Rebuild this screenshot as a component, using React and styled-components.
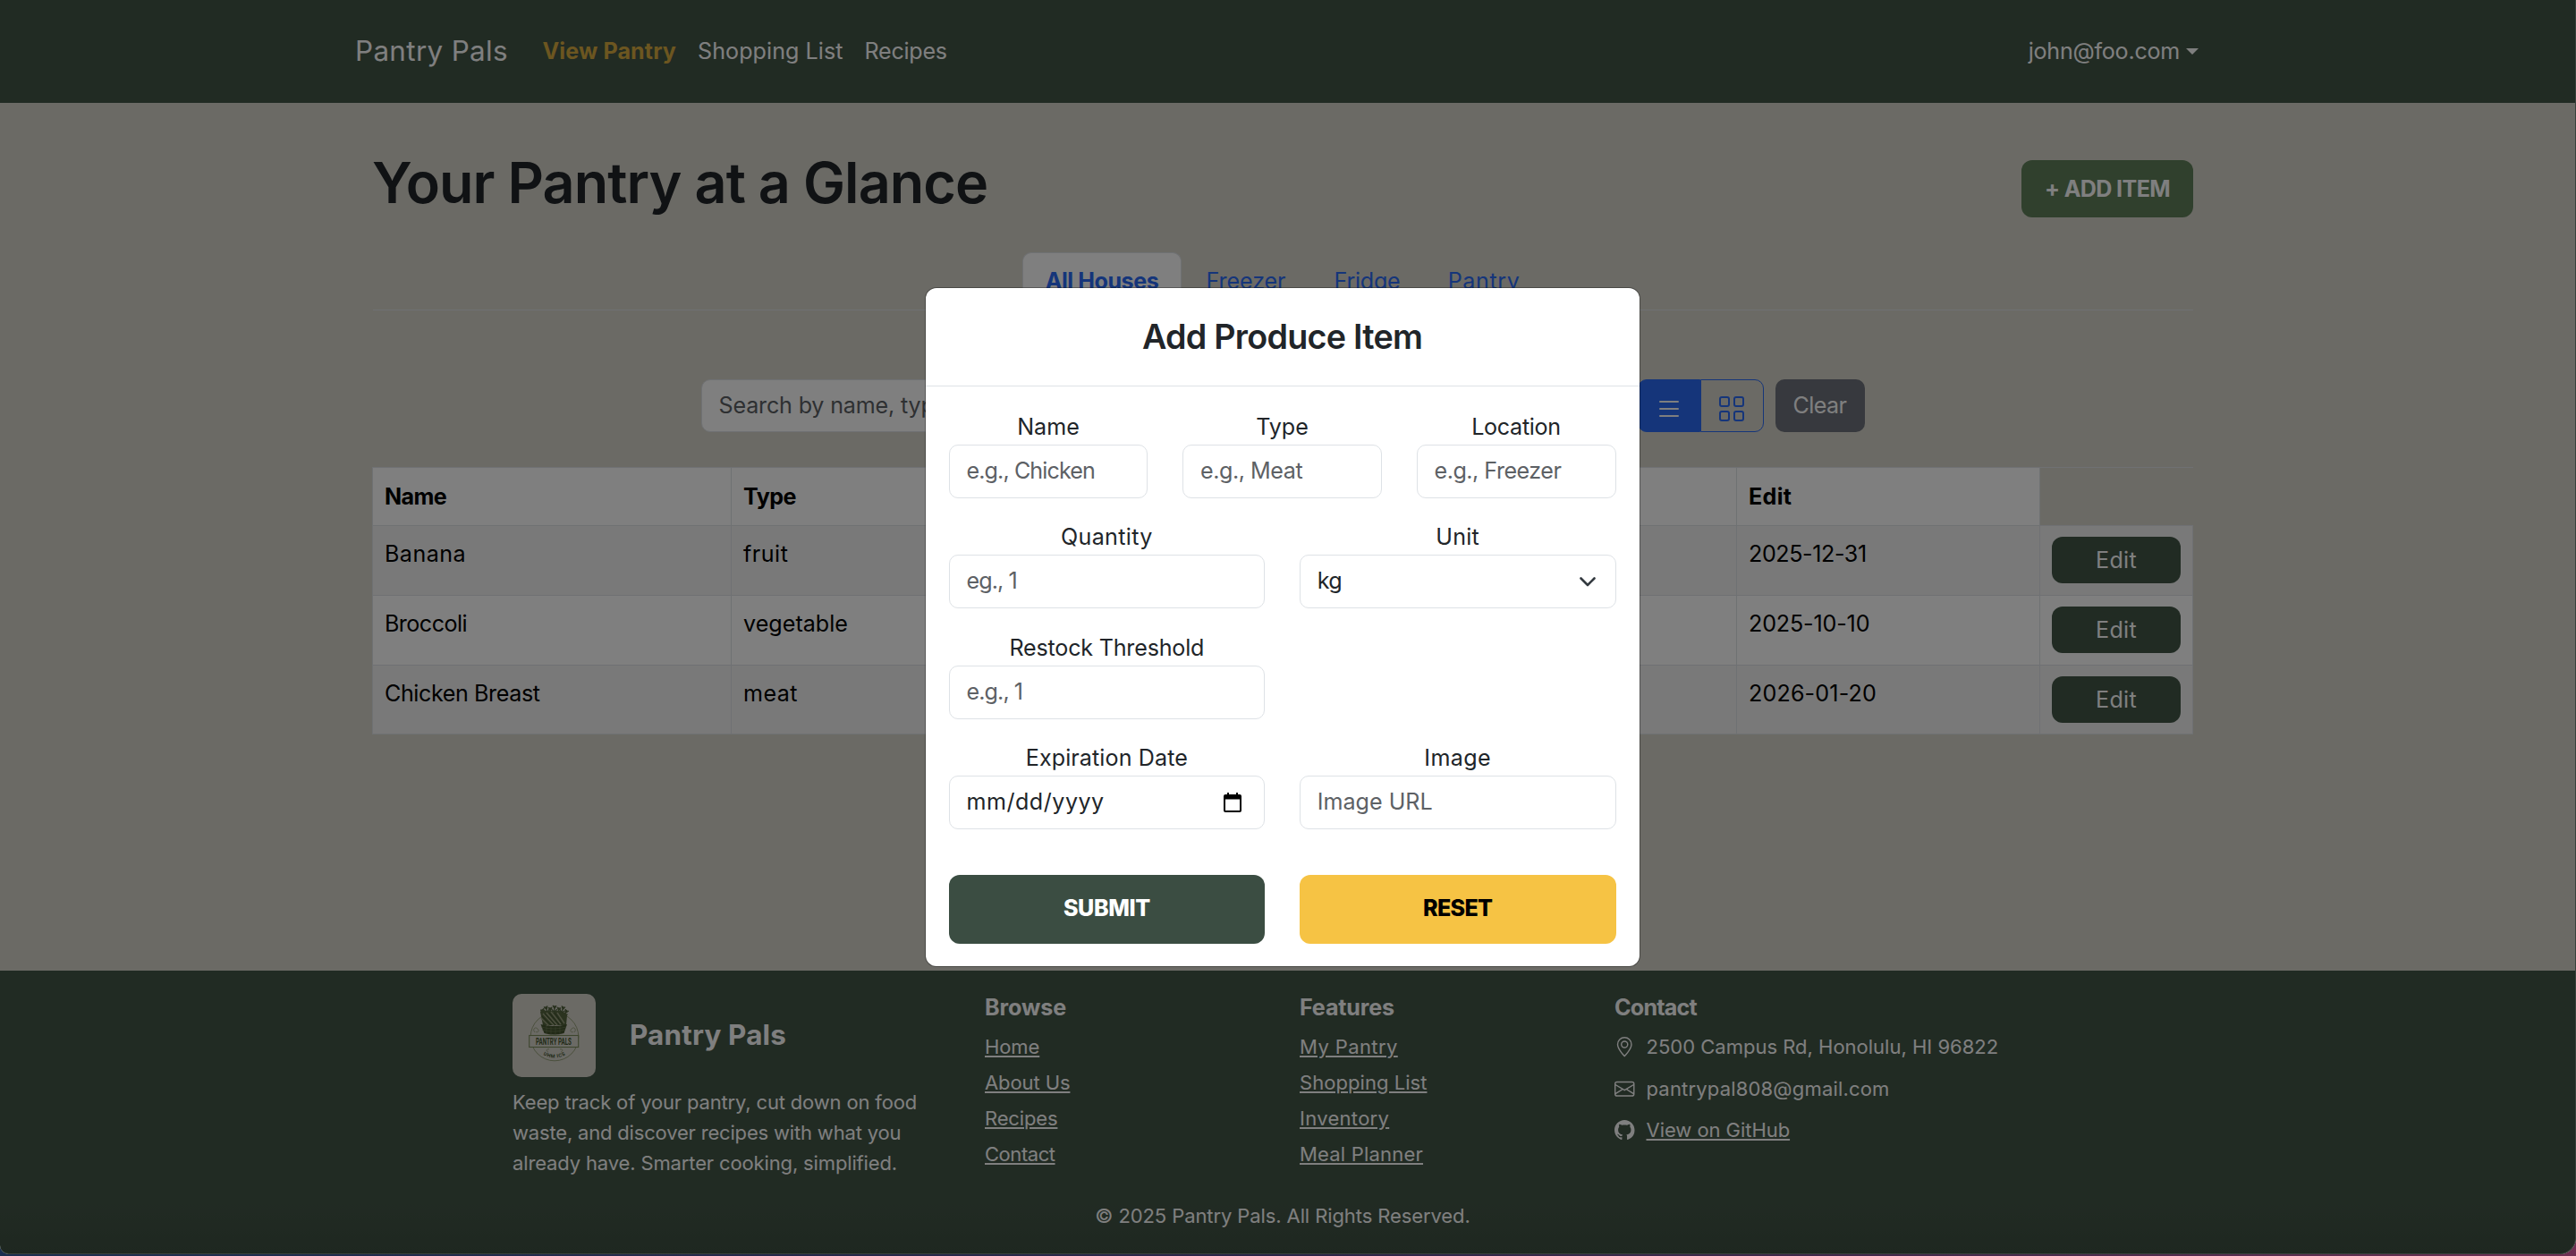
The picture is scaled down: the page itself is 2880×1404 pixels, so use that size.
import React from "react";
import styled, { createGlobalStyle } from "styled-components";
import { BsList, BsGrid, BsGeoAlt, BsEnvelope, BsGithub } from "react-icons/bs";

const Global = createGlobalStyle`
  *, *::before, *::after { box-sizing: border-box; }
  body {
    margin: 0;
    height: 1404px;
    overflow: hidden;
    background: linear-gradient(90deg, #1c2e50, #2b2547 50%, #4a2a4c 80%, #6e2f52);
    font-family: Inter, Roboto, "Liberation Sans", sans-serif;
    font-size: 25.1px;
    line-height: 37.7px;
    color: #212529;
  }
  h1, h2, h3, p { margin: 0; }
  button { font: inherit; }
`;

const Text = styled.span`
  letter-spacing: ${(p) => p.$ls || 0}px;
  white-space: nowrap;
`;

const Frame = styled.div`
  position: relative;
  height: 1402px;
  overflow: hidden;
  display: flex;
  flex-direction: column;
  background: #d6d4ca;
  border-radius: 0 0 18px 10px;
`;

const Navbar = styled.header`
  height: 115px;
  flex: none;
  padding: 0 409px 0 397px;
  display: flex;
  align-items: center;
  background: #435647;
  color: #fff;
`;

const Brand = styled.a`
  width: 209.5px;
  font-size: 31.4px;
`;

const NavLinks = styled.nav`
  display: flex;
  gap: 24px;
  flex: 1;
`;

const NavLink = styled.a`
  color: ${(p) => (p.$active ? "#d8ac40" : "#fff")};
  font-weight: ${(p) => (p.$active ? 700 : 400)};
`;

const UserMenu = styled.a`
  display: flex;
  align-items: center;
  gap: 7px;
  margin-right: 13px;
  &::after {
    content: "";
    border: 7px solid transparent;
    border-top-color: #fff;
    border-bottom: 0;
  }
`;

const Main = styled.main`
  height: 970px;
  flex: none;
  padding: 52px 428px 0 417px;
`;

const TitleRow = styled.div`
  height: 115px;
  display: flex;
  justify-content: space-between;
  align-items: flex-start;
`;

const Title = styled.h1`
  margin-left: -1px;
  font-size: 62.8px;
  line-height: 74px;
  font-weight: 600;
`;

const AddButton = styled.button`
  width: 192px;
  height: 64px;
  margin-top: 12px;
  padding: 1px 0 0;
  border: 0;
  border-radius: 12px;
  background: #60805a;
  color: #fff;
  font-weight: 700;
`;

const Tabs = styled.div`
  height: 65px;
  display: flex;
  justify-content: center;
  border-bottom: 1px solid #dee2e6;
`;

const Tab = styled.a`
  width: ${(p) => p.$width}px;
  height: 65px;
  display: flex;
  align-items: center;
  justify-content: center;
  border: 1px solid ${(p) => (p.$active ? "#dee2e6" : "transparent")};
  border-bottom: 0;
  border-radius: 10px 10px 0 0;
  background: ${(p) => (p.$active ? "#fff" : "transparent")};
  color: #2b6bf5;
  font-weight: ${(p) => (p.$active ? 700 : 400)};
`;

const SearchRow = styled.div`
  margin: 77px 1px 39px 0;
  height: 59px;
  display: flex;
  justify-content: center;
  gap: 13px;
`;

const Field = styled.div`
  width: ${(p) => (p.$width ? p.$width + "px" : "auto")};
  height: ${(p) => (p.$width ? 59 : 60)}px;
  padding: 0 ${(p) => (p.$select ? 22 : 25)}px 0 19px;
  display: flex;
  align-items: center;
  justify-content: space-between;
  border: 1px solid #dee2e6;
  border-radius: 10px;
  background: #fff;
  color: ${(p) => (p.$filled ? "#212529" : "#5d6165")};
`;

const ToggleGroup = styled.div`
  display: flex;
`;

const Toggle = styled.button`
  width: ${(p) => (p.$active ? 70 : 71)}px;
  padding: 6px 0 0;
  display: flex;
  align-items: center;
  justify-content: center;
  border: 1px solid #2b6bf5;
  border-radius: ${(p) => (p.$active ? "10px 0 0 10px" : "0 10px 10px 0")};
  background: ${(p) => (p.$active ? "#2b6bf5" : "transparent")};
  color: ${(p) => (p.$active ? "#fff" : "#2b6bf5")};
`;

const ClearButton = styled.button`
  width: 100px;
  padding: 0;
  border: 0;
  border-radius: 10px;
  background: #6e737c;
  color: #fff;
`;

const Table = styled.table`
  width: 2035px;
  margin-left: -1px;
  table-layout: fixed;
  border-collapse: collapse;
  color: #000;
`;

const Col = styled.col`
  width: ${(p) => p.$width}px;
`;

const Th = styled.th`
  height: 65px;
  padding: 1px 13px 0;
  text-align: left;
  border: 1px solid #dee2e6;
  ${(p) => p.$blank && "border-right: 0;"}
  background: ${(p) => (p.$blank ? "transparent" : "#fff")};
`;

const Tr = styled.tr`
  height: ${(p) => p.$height}px;
  background: ${(p) => (p.$striped ? "#f2f2f2" : "#fff")};
`;

const Td = styled.td`
  padding: ${(p) => (p.$action ? 12 : 13)}px 13px 0;
  vertical-align: top;
  border: 1px solid #dee2e6;
`;

const EditButton = styled.button`
  display: block;
  width: 144px;
  height: 52px;
  padding: 1px 0 0;
  border: 0;
  border-radius: 12px;
  background: #435647;
  color: #fff;
`;

const Footer = styled.footer`
  flex: 1;
  padding: 26px 12px 0 0;
  background: linear-gradient(#435647 82%, #3d4f41);
  color: #fff;
  font-size: 22px;
  line-height: 33px;
`;

const FooterGrid = styled.div`
  height: 232px;
  padding-left: 573px;
  display: grid;
  grid-template-columns: 528px 352px 352px auto;
  align-items: start;
`;

const FooterBrand = styled.div`
  display: flex;
  align-items: center;
  gap: 38px;
  margin-bottom: 10.5px;
  font-size: 31.4px;
  font-weight: 700;
`;

const LogoBox = styled.div`
  width: 93px;
  height: 93px;
  border-radius: 10px;
  background: #d6d4ca;
`;

const Blurb = styled.p`
  display: flex;
  flex-direction: column;
  line-height: 34.2px;
`;

const FooterColumn = styled.div`
  display: flex;
  flex-direction: column;
  align-items: flex-start;
  gap: ${(p) => p.$gap}px;
`;

const FooterHeading = styled.h3`
  font-size: 25.1px;
  line-height: 30px;
  margin-bottom: ${(p) => 13 - p.$gap}px;
`;

const FooterLink = styled.a`
  text-decoration: underline;
  text-decoration-thickness: 2px;
  text-underline-offset: 2px;
`;

const ContactLine = styled.div`
  display: flex;
  align-items: center;
  gap: 13px;
`;

const Copyright = styled.p`
  text-align: center;
`;

const Backdrop = styled.div`
  position: absolute;
  inset: 0;
  padding: 322px 12px 0 0;
  display: flex;
  justify-content: center;
  align-items: flex-start;
  background: rgba(0, 0, 0, 0.5);
  border-right: 1px solid #39413b;
  border-bottom: 1px solid #39413b;
  border-radius: 0 0 18px 10px;
`;

const Modal = styled.section`
  width: 798px;
  height: 758px;
  border-radius: 12px;
  background: #fff;
  box-shadow: 0 0 0 1px rgba(0, 0, 0, 0.3);
`;

const ModalTitle = styled.h2`
  height: 110px;
  display: flex;
  align-items: center;
  justify-content: center;
  border-bottom: 1px solid #dee2e6;
  font-size: 37.7px;
  font-weight: 600;
`;

const Form = styled.div`
  padding: 27px 26px 0;
`;

const FormRow = styled.div`
  display: grid;
  grid-template-columns: repeat(${(p) => p.$cols}, 1fr);
  column-gap: 38.6px;
  margin-bottom: ${(p) => (p.$last ? 51 : 26.2)}px;
`;

const Group = styled.div`
  display: grid;
  grid-template-rows: 37.7px 59.6px;
`;

const Label = styled.span`
  text-align: center;
`;

const FormButton = styled.button`
  height: 77px;
  padding: 0;
  border: 0;
  border-radius: 12px;
  font-weight: 800;
  background: ${(p) => (p.$reset ? "#f6c344" : "#3b4d42")};
  color: ${(p) => (p.$reset ? "#000" : "#fff")};
`;

function FormField({ label, labelLs, text, textLs, filled, select, children }) {
  return (
    <Group>
      <Label><Text $ls={labelLs}>{label}</Text></Label>
      <Field $filled={filled} $select={select}>
        <Text $ls={textLs}>{text}</Text>
        {children}
      </Field>
    </Group>
  );
}

function Logo() {
  const leaves = [
    [33, 17, -28], [37, 14, -15], [42, 15, -5], [47, 13, 4], [52, 15, 10], [57, 14, 18], [61, 18, 30],
  ];
  return (
    <svg width="93" height="93" viewBox="0 0 93 93" fill="none">
      <circle cx="47" cy="48" r="26.8" stroke="#8e9a70" strokeWidth="0.9" />
      <path d="M25 43c-3-3 0-7 3-4s-1 5-2 3M69 43c3-3 0-7-3-4s1 5 2 3M40 65c-3-1-2-4 1-3M54 65c3-1 2-4-1-3" stroke="#8e9a70" strokeWidth="0.8" />
      {leaves.map(([x, y, r]) => (
        <g key={x} transform={`translate(${x} ${y}) rotate(${r})`} stroke="#4f603a" strokeWidth="1.3">
          <path d="M0 18V0M0 8l-3-4M0 8l3-4M0 3l-2-3M0 4l2-4" />
        </g>
      ))}
      <path d="M31 20q3-5 7 0q4-4 8 1q6-5 10 0q4-2 5 3l-1 11H34z" fill="#56663f" />
      <path d="M34 22l13 14M38 21l12 14M43 20l11 14M50 21l8 12M32 27l9 9" stroke="#9a9f7e" strokeWidth="1.4" />
      <path d="M36 22l12 13M41 21l11 13M47 21l9 13M33 25l10 10" stroke="#42522f" strokeWidth="1" />
      <path d="M31.5 34q15 4 29.500 0l-3.500 10q-11 3-22 0z" fill="#44542f" />
      <path d="M32 37q14 4 28 0M33 40q13 4 26 0M38 36v9M43 37v9M48 37v9M53 36v9" stroke="#748059" strokeWidth="0.6" />
      <rect x="18.700" y="46.500" width="55" height="13" fill="#d6d4ca" stroke="#7c8c5d" strokeWidth="1.100" />
      <text transform="translate(26 57.200) scale(0.54 1)" fontFamily="Roboto, sans-serif" fontWeight="700" fontSize="11.500" fill="#44542f">PANTRY PALS</text>
      <path id="logo-arc" d="M23.500 48a23.500 23.500 0 0 0 47 0" />
      <text fontFamily="Roboto, sans-serif" fontWeight="700" fontSize="5.500" fill="#44542f" letterSpacing="0.600">
        <textPath href="#logo-arc" startOffset="50%" textAnchor="middle">UHM ICS</textPath>
      </text>
    </svg>
  );
}

const rows = [
  { name: ["Banana", 0.44], type: ["fruit", 0.5], date: ["2025-12-31", -0.4], height: 78 },
  { name: ["Broccoli", -0.55], type: ["vegetable", 0.03], date: ["2025-10-10", -0.15], height: 78 },
  { name: ["Chicken Breast", -0.4], type: ["meat", 0.4], date: ["2026-01-20", 0.15], height: 77 },
];

const browse = [["Home", -0.1], ["About Us", -0.1], ["Recipes", -0.15], ["Contact", -0.45]];
const features = [["My Pantry", 0.4], ["Shopping List", 0.05], ["Inventory", 0.3], ["Meal Planner", 0.2]];

export default function App() {
  return (
    <>
      <Global />
      <Frame>
        <Navbar>
          <Brand><Text $ls={0.35}>Pantry Pals</Text></Brand>
          <NavLinks>
            <NavLink $active><Text $ls={0.1}>View Pantry</Text></NavLink>
            <NavLink><Text $ls={0.05}>Shopping List</Text></NavLink>
            <NavLink><Text $ls={-0.25}>Recipes</Text></NavLink>
          </NavLinks>
          <UserMenu><Text $ls={-0.25}>john@foo.com</Text></UserMenu>
        </Navbar>

        <Main>
          <TitleRow>
            <Title><Text $ls={-0.9}>Your Pantry at a Glance</Text></Title>
            <AddButton><Text $ls={-0.63}>+ ADD ITEM</Text></AddButton>
          </TitleRow>
          <Tabs>
            <Tab $active $width={178}><Text $ls={-0.45}>All Houses</Text></Tab>
            <Tab $width={144}><Text $ls={-0.1}>Freezer</Text></Tab>
            <Tab $width={127}><Text $ls={-0.25}>Fridge</Text></Tab>
            <Tab $width={134}><Text $ls={0.6}>Pantry</Text></Tab>
          </Tabs>
          <SearchRow>
            <Field $width={1034}><Text $ls={-0.17}>Search by name, type</Text></Field>
            <ToggleGroup>
              <Toggle $active><BsList size={32} /></Toggle>
              <Toggle><BsGrid size={32} /></Toggle>
            </ToggleGroup>
            <ClearButton><Text $ls={-0.56}>Clear</Text></ClearButton>
          </SearchRow>
          <Table>
            <colgroup>
              <Col $width={401} />
              <Col $width={1124} />
              <Col $width={339} />
              <Col $width={171} />
            </colgroup>
            <thead>
              <tr>
                <Th><Text $ls={-0.64}>Name</Text></Th>
                <Th><Text $ls={-0.5}>Type</Text></Th>
                <Th><Text $ls={0.3}>Edit</Text></Th>
                <Th $blank />
              </tr>
            </thead>
            <tbody>
              {rows.map((r, i) => (
                <Tr key={r.name[0]} $striped={i % 2 === 0} $height={r.height}>
                  <Td><Text $ls={r.name[1]}>{r.name[0]}</Text></Td>
                  <Td><Text $ls={r.type[1]}>{r.type[0]}</Text></Td>
                  <Td><Text $ls={r.date[1]}>{r.date[0]}</Text></Td>
                  <Td $action><EditButton><Text $ls={0.3}>Edit</Text></EditButton></Td>
                </Tr>
              ))}
            </tbody>
          </Table>
        </Main>

        <Footer>
          <FooterGrid>
            <div>
              <FooterBrand>
                <LogoBox><Logo /></LogoBox>
                <Text $ls={0.18}>Pantry Pals</Text>
              </FooterBrand>
              <Blurb>
                <Text $ls={-0.16}>Keep track of your pantry, cut down on food</Text>
                <Text $ls={-0.18}>waste, and discover recipes with what you</Text>
                <Text $ls={-0.14}>already have. Smarter cooking, simplified.</Text>
              </Blurb>
            </div>
            <FooterColumn $gap={7}>
              <FooterHeading $gap={7}><Text $ls={-0.1}>Browse</Text></FooterHeading>
              {browse.map(([t, ls]) => (
                <FooterLink key={t}><Text $ls={ls}>{t}</Text></FooterLink>
              ))}
            </FooterColumn>
            <FooterColumn $gap={7}>
              <FooterHeading $gap={7}><Text $ls={-0.15}>Features</Text></FooterHeading>
              {features.map(([t, ls]) => (
                <FooterLink key={t}><Text $ls={ls}>{t}</Text></FooterLink>
              ))}
            </FooterColumn>
            <FooterColumn $gap={13.5}>
              <FooterHeading $gap={13.5}><Text $ls={-0.77}>Contact</Text></FooterHeading>
              <ContactLine><BsGeoAlt size={22.5} /><Text $ls={0}>2500 Campus Rd, Honolulu, HI 96822</Text></ContactLine>
              <ContactLine><BsEnvelope size={22.5} /><Text $ls={0.18}>pantrypal808@gmail.com</Text></ContactLine>
              <ContactLine><BsGithub size={22.5} /><FooterLink><Text $ls={-0.05}>View on GitHub</Text></FooterLink></ContactLine>
            </FooterColumn>
          </FooterGrid>
          <Copyright><Text $ls={-0.1}>© 2025 Pantry Pals. All Rights Reserved.</Text></Copyright>
        </Footer>

        <Backdrop>
          <Modal>
            <ModalTitle><Text $ls={-0.75}>Add Produce Item</Text></ModalTitle>
            <Form>
              <FormRow $cols={3}>
                <FormField label="Name" labelLs={0} text="e.g., Chicken" textLs={-0.89} />
                <FormField label="Type" labelLs={0} text="e.g., Meat" textLs={-0.45} />
                <FormField label="Location" labelLs={-0.3} text="e.g., Freezer" textLs={-0.5} />
              </FormRow>
              <FormRow $cols={2}>
                <FormField label="Quantity" labelLs={0.35} text="eg., 1" textLs={-0.9} />
                <FormField label="Unit" labelLs={0.2} text="kg" textLs={-0.8} filled select>
                  <svg width="18" height="11" viewBox="0 0 18 11" fill="none" stroke="#343a40" strokeWidth="2.600" strokeLinecap="round" strokeLinejoin="round">
                    <path d="M1.500 1.500L9 9l7.500-7.500" />
                  </svg>
                </FormField>
              </FormRow>
              <FormRow $cols={2}>
                <FormField label="Restock Threshold" labelLs={-0.2} text="e.g., 1" textLs={-0.9} />
              </FormRow>
              <FormRow $cols={2} $last>
                <FormField label="Expiration Date" labelLs={0.1} text="mm/dd/yyyy" textLs={0.5} filled>
                  <svg width="20" height="22" viewBox="0 0 20 22">
                    <path fill="#000" fillRule="evenodd" d="M4 0h2v2h8V0h2v2h2q2 0 2 2v16q0 2-2 2H2q-2 0-2-2V4q0-2 2-2h2zM2 7.500V20h16V7.500z" />
                  </svg>
                </FormField>
                <FormField label="Image" labelLs={0.35} text="Image URL" textLs={0} />
              </FormRow>
              <FormRow $cols={2}>
                <FormButton><Text $ls={-0.4}>SUBMIT</Text></FormButton>
                <FormButton $reset><Text $ls={-0.7}>RESET</Text></FormButton>
              </FormRow>
            </Form>
          </Modal>
        </Backdrop>
      </Frame>
    </>
  );
}
